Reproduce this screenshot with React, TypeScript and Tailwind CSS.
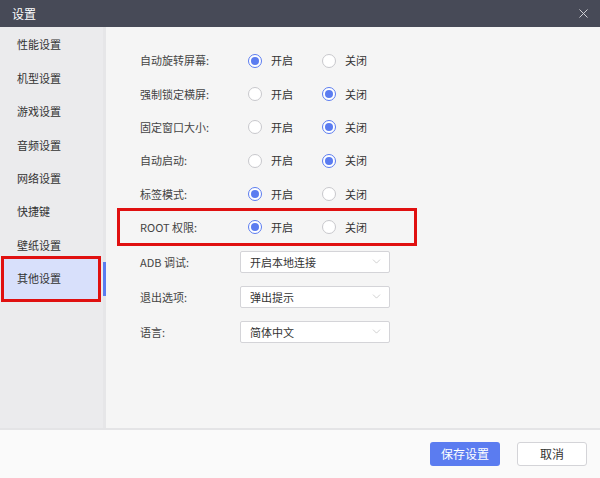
import { ChevronDown, X } from "lucide-react";

const font = { fontFamily: '"Microsoft YaHei", "Noto Sans CJK SC", sans-serif' };

const menu = ["性能设置", "机型设置", "游戏设置", "音频设置", "网络设置", "快捷键", "壁纸设置", "其他设置"];

const radios: { label: string; on: boolean; boxed?: boolean }[] = [
  { label: "自动旋转屏幕:", on: true },
  { label: "强制锁定横屏:", on: false },
  { label: "固定窗口大小:", on: false },
  { label: "自动启动:", on: false },
  { label: "标签模式:", on: true },
  { label: "ROOT 权限:", on: true, boxed: true },
];

const selects = [
  { label: "ADB 调试:", value: "开启本地连接" },
  { label: "退出选项:", value: "弹出提示" },
  { label: "语言:", value: "简体中文" },
];

function Radio({ checked, text }: { checked: boolean; text: string }) {
  return (
    <div className="flex items-center gap-[9px] w-[74px]">
      <span
        className={`flex items-center justify-center w-[14px] h-[14px] rounded-full border bg-white ${
          checked ? "border-[#5b7cf0]" : "border-[#c8c8cc]"
        }`}
      >
        {checked && <span className="w-[8px] h-[8px] rounded-full bg-[#5b7cf0]" />}
      </span>
      <span className="text-[11px] text-[#333]">{text}</span>
    </div>
  );
}

export default function App() {
  return (
    <div className="w-[600px] h-[478px] flex flex-col bg-[#fafafa]" style={font}>
      <div className="h-[27px] bg-[#474a57] flex items-center justify-between pl-[12px] pr-[9px] shrink-0">
        <span className="text-[12px] text-white">设置</span>
        <X size={15} strokeWidth={1.5} className="text-[#d8d8dc]" />
      </div>
      <div className="flex flex-1 border-b-2 border-[#e4e4e6]">
        <div className="w-[103px] bg-[#ebebed] pt-[1px] relative shrink-0">
          {menu.map((m, i) => {
            const active = i === menu.length - 1;
            return active ? (
              <div
                key={m}
                className="h-[40px] -mt-[3px] mx-[2px] pl-[15px] flex items-center text-[11px] text-[#333] bg-[#d8e0fb] relative"
              >
                {m}
                <div className="absolute -left-[1px] -top-[3px] right-0 -bottom-[3px] border-[3px] border-[#e01010]" />
              </div>
            ) : (
              <div key={m} className="h-[33.4px] flex items-center pl-[17px] text-[11px] text-[#333]">
                {m}
              </div>
            );
          })}
          <div className="absolute right-[-3px] top-[235px] w-[3px] h-[34px] bg-[#5b7cf0]" />
        </div>
        <div className="w-[3px] bg-[#e6e6e8]" />
        <div className="flex-1 bg-[#f5f5f5] pt-[17px] pl-[11px]">
          {radios.map((r) =>
            r.boxed ? (
              <div
                key={r.label}
                className="flex items-center h-[38px] -my-[2px] w-[300px] pl-[20px] border-[3px] border-[#e01010]"
              >
                <span className="w-[108px] text-[11px] text-[#444]">{r.label}</span>
                <Radio checked={r.on} text="开启" />
                <Radio checked={!r.on} text="关闭" />
              </div>
            ) : (
              <div key={r.label} className="flex items-center h-[33.3px] pl-[23px]">
                <span className="w-[108px] text-[11px] text-[#444]">{r.label}</span>
                <Radio checked={r.on} text="开启" />
                <Radio checked={!r.on} text="关闭" />
              </div>
            )
          )}
          {selects.map((s) => (
            <div key={s.label} className="flex items-center h-[35px] pl-[23px]">
              <span className="w-[100px] text-[11px] text-[#444]">{s.label}</span>
              <div className="w-[150px] h-[22px] border border-[#d4d4d8] rounded-[2px] bg-white flex items-center justify-between pl-[9px] pr-[6px]">
                <span className="text-[11px] text-[#333]">{s.value}</span>
                <ChevronDown size={13} strokeWidth={1} className="text-[#aaa]" />
              </div>
            </div>
          ))}
        </div>
      </div>
      <div className="h-[48px] flex items-center justify-end gap-[17px] pr-[13px] shrink-0">
        <button className="w-[70px] h-[24px] rounded-[3px] bg-[#5b7cf0] text-white text-[12px]">保存设置</button>
        <button className="w-[70px] h-[24px] rounded-[3px] bg-white border border-[#d4d4d8] text-[#333] text-[12px]">取消</button>
      </div>
    </div>
  );
}
